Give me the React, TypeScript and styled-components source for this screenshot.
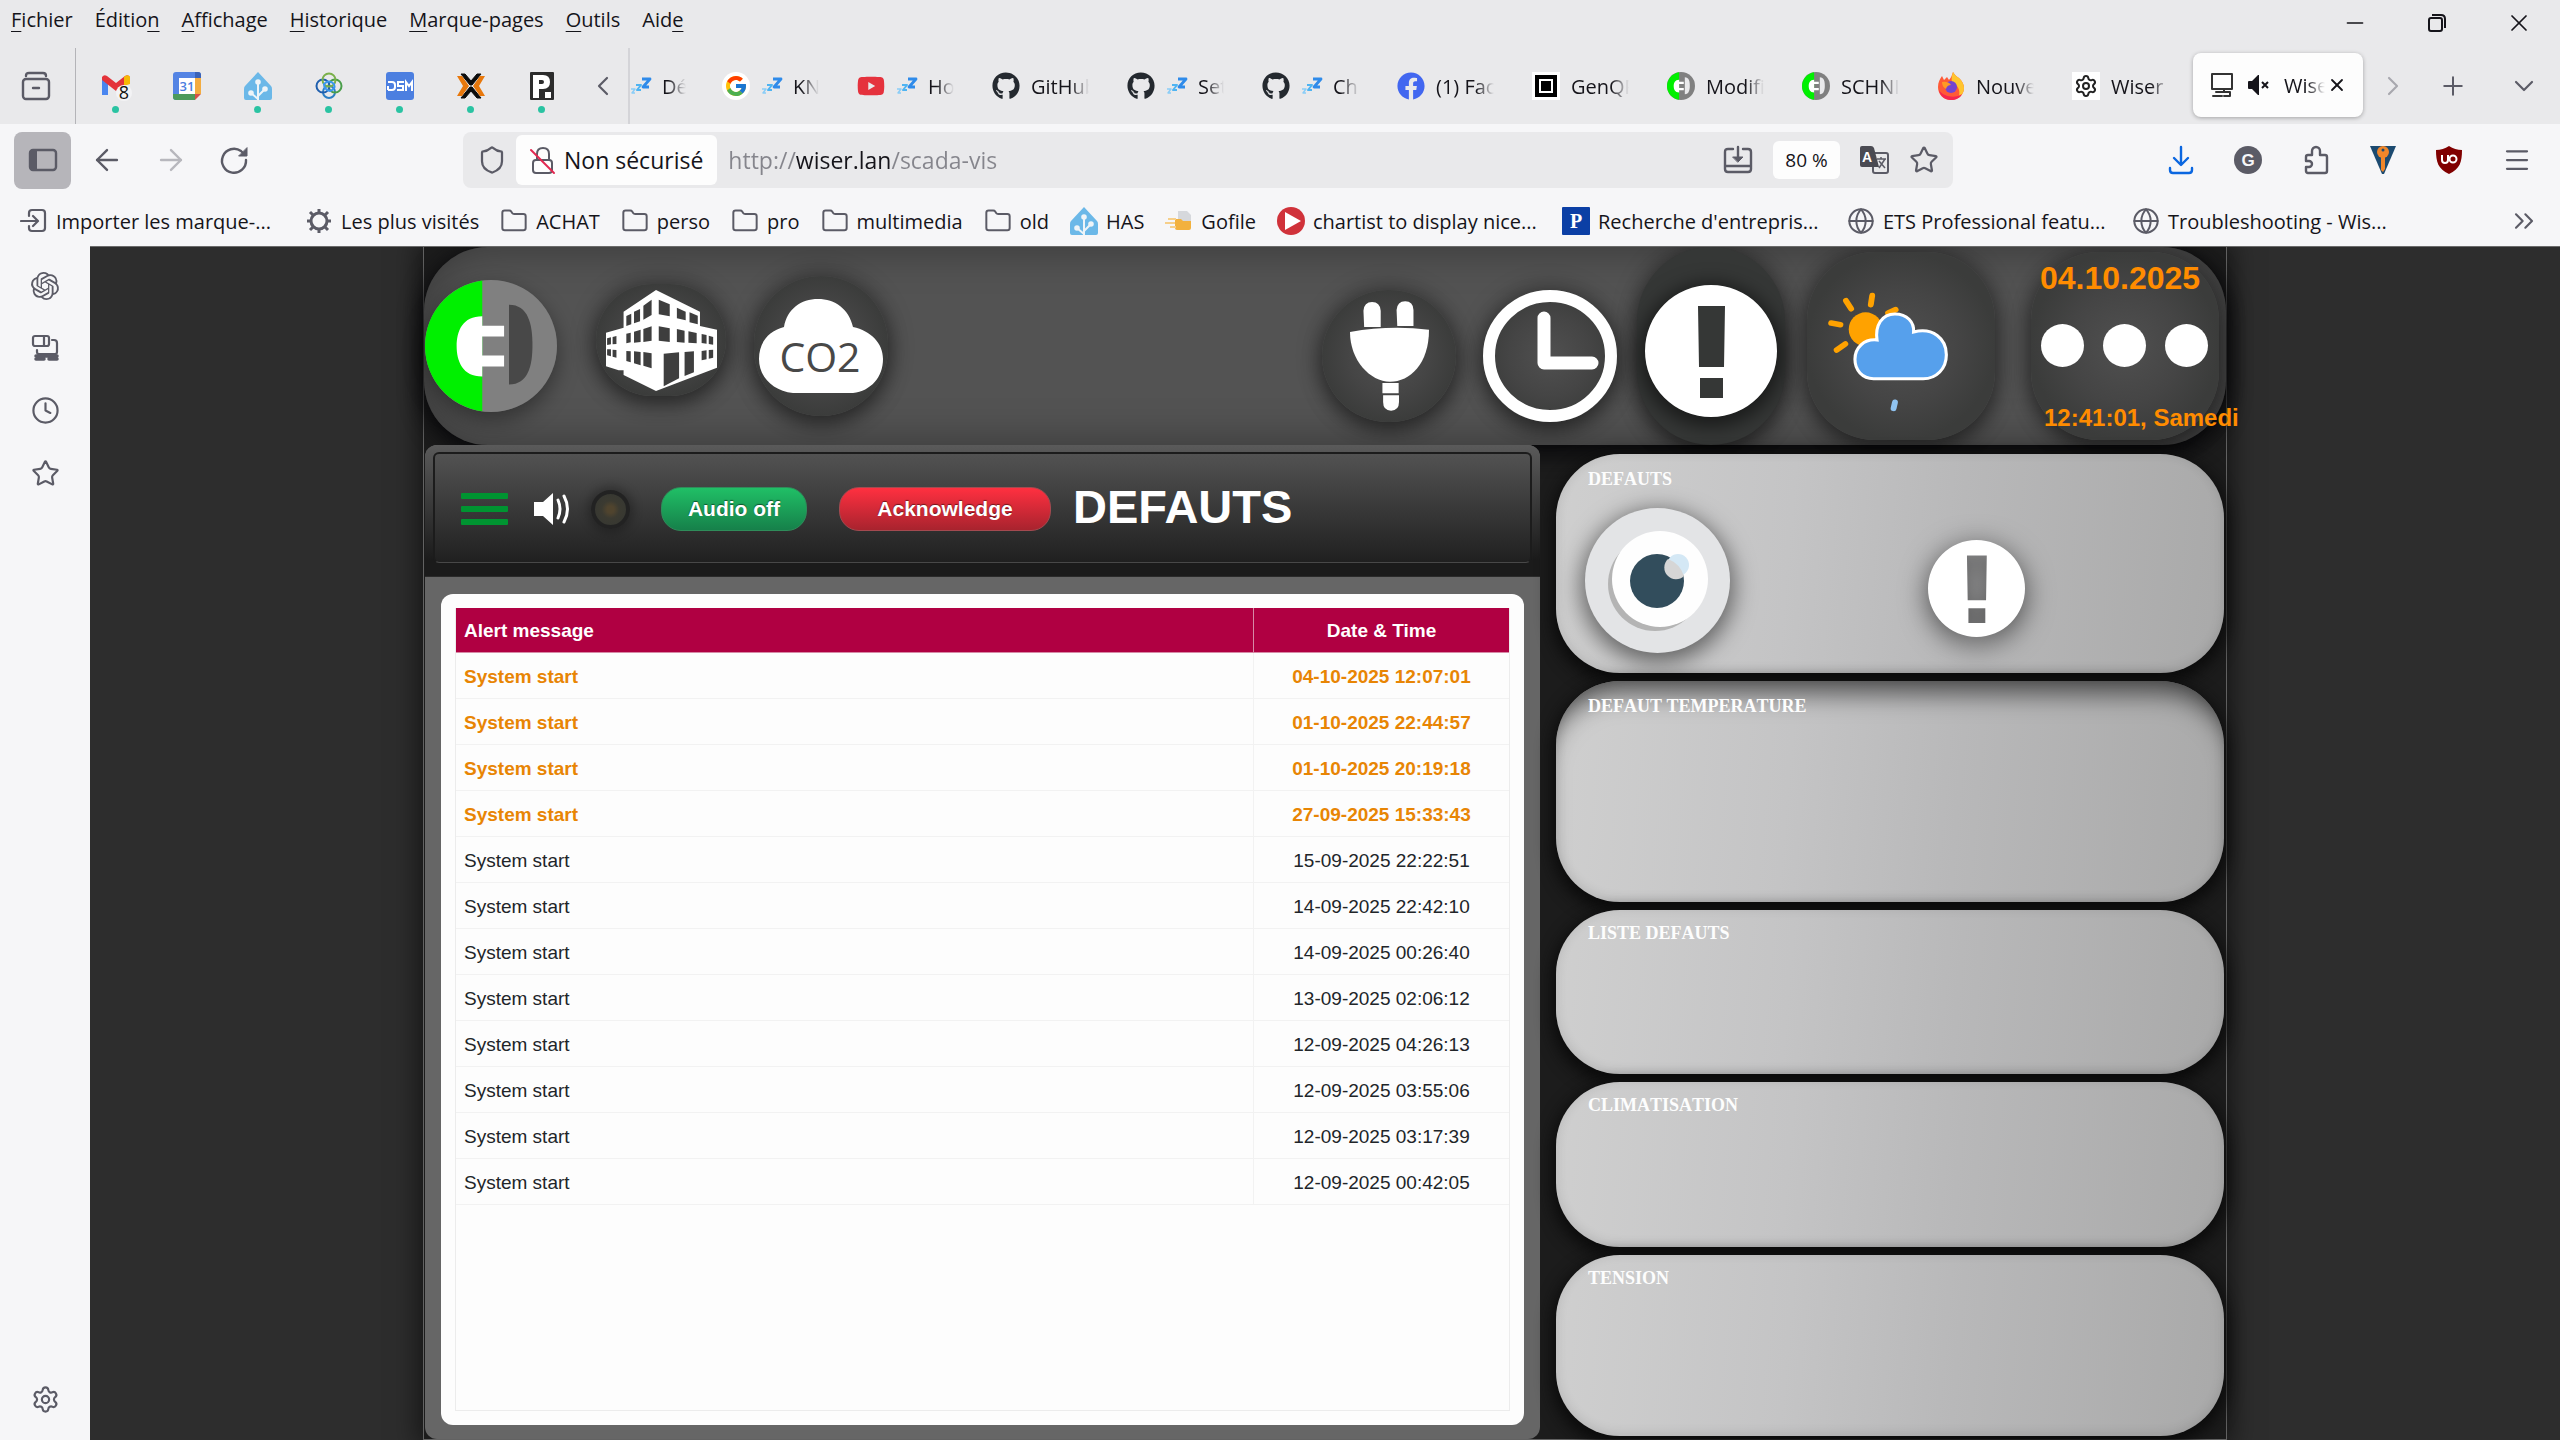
import React from "react";
import styled, { createGlobalStyle, css } from "styled-components";
import {
  ArrowLeft, ArrowRight, RotateCw, Shield, Folder, Star, Globe, Menu, Plus,
  ChevronLeft, ChevronRight, ChevronDown, ChevronsRight, X, Minus, Clock, Settings,
} from "lucide-react";
import { FaGithub, FaFacebook, FaYoutube } from "react-icons/fa";
import { FcGoogle } from "react-icons/fc";
import { SiOpenai } from "react-icons/si";

const ui = `"Segoe UI", "Open Sans", "Noto Sans", sans-serif`;
const arial = `"Liberation Sans", Arial, sans-serif`;
const ink = "#5b5b66";

const Global = createGlobalStyle`
  *, *::before, *::after { box-sizing: border-box; }
  body { margin: 0; background: #2d2d2d; font-family: ${ui}; }
  button { font: inherit; color: inherit; background: none; border: 0; padding: 0; cursor: pointer; }
  button svg { display: block; overflow: visible; }
  a { color: inherit; text-decoration: none; }
`;

/* ---------- browser chrome ---------- */

const Window = styled.div`
  display: flex;
  flex-direction: column;
  min-height: 100vh;
  color: #15141a;
`;

const TitleBar = styled.header`
  display: flex;
  justify-content: space-between;
  height: 46px;
  padding-left: 11px;
  background: #e9e9eb;
`;

const MenuList = styled.nav`
  display: flex;
  gap: 22px;
  font-size: 20px;
  line-height: 40px;
  u { text-underline-offset: 4px; text-decoration-thickness: 1px; }
`;

const WindowButtons = styled.div`
  display: flex;
  button { display: grid; place-items: center; width: 82px; }
`;

const TabStrip = styled.div`
  display: flex;
  align-items: stretch;
  height: 78px;
  padding-top: 2px;
  background: #e9e9eb;
  color: ${ink};
`;

const StripButton = styled.button<{ $w: number; $dim?: boolean }>`
  display: flex;
  flex: none;
  align-items: center;
  justify-content: center;
  width: ${(p) => p.$w}px;
  opacity: ${(p) => (p.$dim ? 0.45 : 1)};
`;

const PinnedList = styled.div`
  display: flex;
  flex: none;
  margin-left: 4px;
  padding-left: 4px;
  border-left: 1px solid #b4b4b8;
`;

const Pinned = styled.button<{ $dot?: boolean }>`
  position: relative;
  display: grid;
  place-items: center;
  width: 71px;
  ${(p) => p.$dot && css`
    &::after {
      content: "";
      position: absolute;
      left: 32px;
      bottom: 11px;
      width: 7px;
      height: 7px;
      border-radius: 50%;
      background: #2ac3a2;
    }
  `}
`;

const Tabs = styled.div`
  display: flex;
  flex: 0 1 1742px;
  min-width: 0;
  overflow: hidden;
  border-left: 2px solid #d4d4d8;
`;

const Tab = styled.button<{ $partial?: boolean }>`
  display: flex;
  flex: none;
  align-items: center;
  gap: 11px;
  width: ${(p) => (p.$partial ? 78 : 135)}px;
  padding: ${(p) => (p.$partial ? "0 22px 0 0" : "0 24px 0 14px")};
  color: #15141a;
  font-size: 20px;
  svg { flex: none; }
`;

const ActiveTab = styled(Tab)`
  width: 170px;
  height: 64px;
  margin: 5px 0;
  padding: 0 16px 0 17px;
  gap: 14px;
  border-radius: 8px;
  background: #fdfdfd;
  box-shadow: 0 1px 4px rgba(0, 0, 0, 0.3);
  button { margin-left: -12px; }
`;

const TabLabel = styled.span`
  flex: 1;
  min-width: 0;
  overflow: hidden;
  text-align: left;
  white-space: nowrap;
  mask-image: linear-gradient(90deg, #000 calc(100% - 18px), transparent);
`;

const ToolBar = styled.div`
  display: flex;
  align-items: center;
  height: 72px;
  padding: 0 14px;
  background: #f6f6f8;
  color: ${ink};
`;

const NavButtons = styled.div`
  display: flex;
  flex: 0 1 449px;
`;

const NavButton = styled.button<{ $active?: boolean; $dim?: boolean }>`
  display: grid;
  place-items: center;
  width: ${(p) => (p.$active ? 57 : 64)}px;
  height: 57px;
  margin-right: ${(p) => (p.$active ? 4 : 0)}px;
  border-radius: 8px;
  background: ${(p) => (p.$active ? "#b6b5ba" : "none")};
  opacity: ${(p) => (p.$dim ? 0.4 : 1)};
`;

const UrlBar = styled.form`
  display: flex;
  flex: 1 1 1490px;
  max-width: 1490px;
  align-items: center;
  height: 56px;
  padding: 0 14px;
  border-radius: 8px;
  background: #e9e9eb;
`;

const Security = styled.button`
  display: flex;
  align-items: center;
  gap: 8px;
  height: 50px;
  margin-left: 9px;
  padding: 0 14px;
  border-radius: 6px;
  background: #fdfdfd;
  color: #15141a;
  font-size: 23px;
  white-space: nowrap;
`;

const UrlInput = styled.input`
  flex: 1;
  min-width: 0;
  height: 50px;
  margin: 0 12px 0 11px;
  padding: 0;
  border: 0;
  outline: 0;
  font-family: ${ui};
  font-size: 23px;
  color: transparent;
  background: linear-gradient(90deg, #85858c 0 68px, #15141a 68px 163px, #85858c 163px);
  background-clip: text;
  -webkit-background-clip: text;
`;

const UrlActions = styled.div`
  display: flex;
  align-items: center;
  gap: 20px;
`;

const Zoom = styled.button`
  width: 67px;
  height: 38px;
  border-radius: 6px;
  background: #fdfdfd;
  color: #15141a;
  font-size: 19px;
`;

const Extensions = styled.div`
  display: flex;
  align-items: center;
  justify-content: space-between;
  width: 364px;
  margin: 0 14px 0 auto;
`;

const Bookmarks = styled.nav`
  display: flex;
  align-items: center;
  gap: 21px;
  height: 50px;
  padding: 0 20px;
  background: #f6f6f8;
  font-size: 20px;
  button { margin-left: auto; color: ${ink}; }
`;

const Bookmark = styled.a<{ $wide?: boolean }>`
  display: flex;
  align-items: center;
  gap: 8px;
  width: ${(p) => (p.$wide ? "264px" : "auto")};
  white-space: nowrap;
  svg { flex: none; color: ${ink}; }
`;

const Body = styled.div`
  display: flex;
  flex: 1;
`;

const SideBar = styled.aside`
  display: flex;
  flex: none;
  flex-direction: column;
  align-items: center;
  gap: 34px;
  width: 90px;
  padding: 26px 0;
  background: #f6f6f8;
  color: ${ink};
  button:last-child { margin-top: auto; }
`;

/* ---------- supervision page ---------- */

const Page = styled.main`
  display: flex;
  flex: 1;
  justify-content: center;
  min-width: 0;
  border-top: 1px solid #6b6b6b;
  background: #2d2d2d;
  overflow: hidden;
  font-family: ${arial};
`;

const Board = styled.div`
  display: flex;
  flex-direction: column;
  width: 1804px;
  border: 1px solid #626262;
  border-width: 0 1px 1px;
  background: #1c1c1c;
  box-shadow: 0 0 24px 6px rgba(0, 0, 0, 0.5);
`;

const TopBar = styled.section`
  display: flex;
  align-items: center;
  height: 198px;
  padding: 0 7px 0 1px;
  border-radius: 64px;
  background: #535353;
  box-shadow: inset 0 0 40px 4px rgba(0, 0, 0, 0.3), 0 6px 20px 4px #0a0a0c;
`;

const Spacer = styled.div`
  flex: 1;
`;

type TileProps = { $w: number; $h: number; $r: number; $gap: number; $seat?: "low" | "high"; $bare?: boolean; $deep?: boolean };

const seats = { low: "20px 0 0", high: "0 0 12px" };

const Tile = styled.button<TileProps>`
  display: grid;
  flex: none;
  place-items: center;
  width: ${(p) => p.$w}px;
  height: ${(p) => p.$h}px;
  margin: ${(p) => (p.$seat ? seats[p.$seat] : 0)};
  margin-left: ${(p) => p.$gap}px;
  padding: ${(p) => (p.$deep ? "10px 0 0" : 0)};
  border-radius: ${(p) => p.$r}px;
  background: ${(p) => (p.$bare ? "transparent" : p.$deep ? "#353736" : "radial-gradient(closest-side, #505050, #454545 60%, #3b3c3b)")};
  box-shadow: ${(p) => (p.$bare ? "0 8px 22px rgba(0, 0, 0, 0.4)" : "0 8px 20px rgba(0, 0, 0, 0.4), 0 0 22px 4px rgba(0, 0, 0, 0.25)")};
`;

const Halo = styled.span`
  display: block;
  border-radius: 50%;
  box-shadow: 0 4px 18px 6px rgba(0, 0, 0, 0.5);
`;

const StatusTile = styled(Tile)`
  display: flex;
  flex-direction: column;
  align-items: flex-start;
  gap: 30px;
  padding: 10px 0 0 9px;
  color: #ff8c00;
  font-weight: 700;
  white-space: nowrap;
`;

const DateText = styled.span`
  font-size: 32px;
  line-height: 32px;
`;

const TimeText = styled.span`
  padding-left: 4px;
  font-size: 24px;
  line-height: 42px;
`;

const Dots = styled.span`
  display: flex;
  justify-content: space-between;
  width: 168px;
  padding-left: 1px;
  i { width: 43px; height: 43px; border-radius: 50%; background: #fff; }
`;

const Columns = styled.div`
  display: grid;
  flex: 1;
  grid-template-columns: 1115fr 668fr;
  gap: 16px;
  padding: 0 2px 0 1px;
`;

const AlertPanel = styled.section`
  display: flex;
  flex-direction: column;
  min-width: 0;
  border-radius: 12px;
  background: #666;
  overflow: hidden;
`;

const AlertHeader = styled.header`
  height: 132px;
  padding: 7px 8px 13px;
  background: linear-gradient(#5a5a5a, #1b1b1b 88%);
  border-bottom: 1px solid #2a2a2a;
`;

const HeaderInner = styled.div`
  display: flex;
  align-items: center;
  height: 111px;
  padding: 2px 26px 0;
  border: 2px solid #1c1c1c;
  border-bottom: 1px solid #484848;
  border-radius: 6px;
  background: linear-gradient(#525252, #202020);
`;

const Burger = styled.button`
  display: grid;
  gap: 7px;
  width: 47px;
  margin-right: 26px;
  i { height: 6px; border-radius: 1px; background: #009431; }
`;

const Led = styled.span`
  width: 39px;
  height: 39px;
  margin: 0 31px 0 21px;
  border: 4px solid #222;
  border-radius: 50%;
  background: radial-gradient(#50442e 0 16%, #3b3a31 40%, #343632);
  box-shadow: 0 0 10px 4px rgba(0, 0, 0, 0.25);
`;

const ActionButton = styled.button<{ $w: number; $tone: "green" | "red" }>`
  width: ${(p) => p.$w}px;
  height: 44px;
  margin-right: ${(p) => (p.$tone === "green" ? 32 : 22)}px;
  border: 1px solid ${(p) => (p.$tone === "green" ? "#2f8c5a" : "#a34a50")};
  border-radius: 20px;
  background: ${(p) => (p.$tone === "green" ? "linear-gradient(#20bf66, #16804a)" : "linear-gradient(#ff3040, #a8232e)")};
  color: #fff;
  font-size: 21px;
  font-weight: 700;
  text-shadow: 0 -1px 1px rgba(0, 0, 0, 0.5);
`;

const Title = styled.h1`
  margin: 0;
  padding-bottom: 5px;
  color: #fff;
  font-size: 47px;
  line-height: 52px;
`;

const AlertCard = styled.div`
  display: flex;
  flex: 1;
  margin: 17px 16px 14px;
  padding: 14px;
  border-radius: 12px;
  background: #fdfdfd;
`;

const TableFrame = styled.div`
  flex: 1;
  border: 1px solid #ececec;
  border-top: 0;
`;

const AlertTable = styled.table`
  width: 100%;
  border-collapse: separate;
  border-spacing: 0;
  font-size: 19px;
  color: #212529;
  th, td { height: 46px; padding: 2px 8px 0; border-bottom: 1px solid #f2f2f2; text-align: left; }
  th { height: 45px; background: #b00042; color: #fff; border-bottom-color: #d78aa6; }
  th + th, td + td { width: 256px; border-left: 1px solid #f2f2f2; text-align: center; }
  th + th { border-left-color: #d78aa6; }
`;

const AlertRow = styled.tr<{ $fresh: boolean }>`
  ${(p) => p.$fresh && css`
    color: #e88504;
    font-weight: 700;
  `}
`;

const CardColumn = styled.div`
  display: grid;
  grid-template-rows: 219fr 221fr 165fr 165fr 181fr;
  gap: 8px;
  padding: 9px 0 3px;
`;

const Card = styled.section<{ $first?: boolean; $shaded?: boolean }>`
  padding: ${(p) => (p.$first || p.$shaded ? 15 : 13)}px 32px 0;
  border-radius: 64px;
  background: linear-gradient(95deg, #cfcfcf, #c4c4c5 35%, #b8b8b9 60%, #a9a9a9);
  box-shadow:
    inset 0 -2px 12px rgba(0, 0, 0, 0.12),
    inset 0 ${(p) => (p.$shaded ? "26px 26px -14px rgba(0, 0, 0, 0.6)" : "0 0 transparent")},
    0 6px 16px 4px #0b0b0b;
`;

const CardTitle = styled.h2`
  margin: 0;
  color: #fdfdfd;
  font: 700 18px/20px "Liberation Serif", "Times New Roman", serif;
  font-kerning: none;
`;

const CardIcons = styled.div`
  display: flex;
  align-items: flex-start;
`;

const EyeButton = styled.button`
  width: 145px;
  height: 145px;
  margin: 19px 198px 0 -3px;
  border-radius: 50%;
  background: #e3e4e6;
  box-shadow: 0 6px 22px 4px rgba(0, 0, 0, 0.5);
`;

const WarnButton = styled.button`
  margin-top: 51px;
  border-radius: 50%;
  svg { filter: drop-shadow(0 6px 14px rgba(0, 0, 0, 0.6)); }
`;

/* ---------- drawings ---------- */

const line = { fill: "none", stroke: "currentColor", strokeWidth: 2, strokeLinecap: "round", strokeLinejoin: "round" } as const;

const Brand = ({ size, hole = "#484848" }: { size: number; hole?: string }) => (
  <svg width={size} height={size} viewBox="46 117 242 398" preserveAspectRatio="none">
    <ellipse cx="167" cy="316" rx="121" ry="199" fill="#808080" />
    <path d="M151 118.800C90 134 46 216 46 316S90 498 151 513Z" fill="#00f000" />
    <path d="M200 192c35 0 43 58 43 121s-8 119-43 119Z" fill={hole} />
    <path d="M151 226c-36 0-47 44-47 90s11 92 47 92v-30h40v-33h-40v-58h40v-32h-40Z" fill="#fff" />
  </svg>
);

const Building = () => {
  const panes = [
    "412,225 421,218 421,250 412,255", "426,212 437,204 437,241 426,247", "443,194 458,176 458,222 443,236",
    "471,176 491,190 491,226 471,220", "504,200 520,212 520,238 504,232", "527,214 542,224 542,250 527,244",
    "412,278 420,275 420,304 412,307", "426,272 438,266 438,303 426,305", "443,264 458,256 458,299 443,303",
    "471,256 491,262 491,303 471,299", "504,264 518,269 518,305 504,303", "525,271 540,276 540,307 525,305",
    "549,279 558,282 558,308 549,306", "562,284 570,288 570,311 562,309",
    "412,330 420,331 420,364 412,360", "426,331 438,333 438,373 426,367", "443,333 458,337 458,382 443,374",
    "480,338 508,334 508,412 480,436", "518,333 535,331 535,394 518,405",
    "549,330 558,328 558,355 549,358", "562,327 570,326 570,350 562,353",
    "377,292 384,289 384,310 377,312", "387,288 394,285 394,309 387,310",
    "377,325 384,325 384,346 377,343", "387,326 394,327 394,350 387,347",
  ];
  return (
    <svg width="111" height="101" viewBox="375 147 202 303" preserveAspectRatio="none">
      <path d="M375 275 407 260V212L466 147 546 212V255L577 266V380L466 450 407 402V388L398 388 375 376Z" fill="#fff" />
      {panes.map((p) => <polygon key={p} points={p} fill="#3e3e3e" />)}
    </svg>
  );
};

const Co2 = () => (
  <svg width="124" height="94" viewBox="0 0 124 94">
    <path d="M34 94C14 92 0 78 0 60 0 44 9 32 25 28 28 10 42 0 59 0s31 10 35 28c18 4 30 16 30 32 0 18-12 32-30 34Z" fill="#fff" />
    <text x="61" y="73" textAnchor="middle" fontFamily="Open Sans, sans-serif" fontSize="41" fill="#484848">CO2</text>
  </svg>
);

const Plug = () => (
  <svg width="79" height="110" viewBox="316 192 229 330" preserveAspectRatio="none" fill="#fff">
    <path d="M355 221q2-26 25-26t25 26v49h-48ZM451 219q2-26 25-26t24 26v48h-47Z" />
    <path d="M316 285Q430 264 545 278C545 380 490 434 432 434S316 370 316 285Z" />
    <path d="M410 438h47v31h-47ZM412 475h46v20q0 26-23 26t-23-26Z" />
  </svg>
);

const WallClock = () => (
  <svg width="134" height="132" viewBox="0 0 134 132" fill="none" stroke="#fff">
    <ellipse cx="67" cy="66" rx="61" ry="60" strokeWidth="12" />
    <path d="M61 28v45h48" strokeWidth="13" strokeLinecap="round" strokeLinejoin="round" />
  </svg>
);

const Exclamation = ({ size }: { size: number }) => (
  <svg width={size} height={size} viewBox="0 0 132 132">
    <path fill="#fff" fillRule="evenodd" d="M66 0a66 66 0 1 1 0 132 66 66 0 0 1 0-132ZM53 21l1 61h25l1-61ZM55 93v20h23V93Z" />
  </svg>
);

const Weather = () => (
  <svg width="188" height="188" viewBox="195 30 545 564" preserveAspectRatio="none">
    <g stroke="#ffa200" strokeWidth="17" strokeLinecap="round">
      <path d="M384 161 380 188M308 176 323 200M265 243 292 248M281 324 306 306M430 213 452 203" />
    </g>
    <ellipse cx="365" cy="262" rx="49" ry="51" fill="#ffa200" />
    <path d="M388 410C355 410 334 384 334 352 334 318 360 290 398 294 392 250 412 216 450 216 485 216 506 240 504 270 560 255 599 290 599 338 599 380 570 410 532 410Z" fill="#56a0ec" stroke="#fff" strokeWidth="9" />
    <path d="M450 481 446 499" stroke="#90c4f2" strokeWidth="17" strokeLinecap="round" />
  </svg>
);

const Eye = () => (
  <svg width="145" height="145" viewBox="0 0 145 145">
    <circle cx="70" cy="76" r="47" fill="#b4b4b4" />
    <circle cx="75" cy="71" r="48" fill="#fefefe" />
    <circle cx="72" cy="73" r="27" fill="#324d5c" />
    <circle cx="93" cy="57" r="11" fill="#d4e8f5" />
    <path d="M83 51a27 27 0 0 1 16 17 11 11 0 0 1-16-17Z" fill="#d6d6d6" />
  </svg>
);

const Speaker = () => (
  <svg width="36" height="32" viewBox="0 0 36 32" fill="#fff">
    <path d="M0 9h9L19 0v32L9 23H0Z" />
    <path d="M24 7q4 9 0 18M30 3q7 13 0 26" fill="none" stroke="#fff" strokeWidth="3" strokeLinecap="round" />
  </svg>
);

const Zzz = () => (
  <svg width="21" height="18" viewBox="0 0 21 18" fill="none" strokeLinejoin="round">
    <path d="M12 2h8l-7 8h6" stroke="#2f8bea" strokeWidth="2.800" />
    <path d="M6 8h5l-4 5h4" stroke="#4fb4f2" strokeWidth="2" />
    <path d="M1 12h4l-3 4h3" stroke="#8acdf7" strokeWidth="1.500" />
  </svg>
);

const Gmail = () => (
  <svg width="30" height="28" viewBox="0 0 30 28">
    <path d="M1 5v18h6V11Z" fill="#4a86f0" />
    <path d="M1 5q2-3 5-1l9 7 9-7q3-2 5 1v3L15 19 1 8Z" fill="#e4333a" />
    <path d="M23 5l1-1q4-2 5 1v7l-6 2Z" fill="#f6b905" />
    <circle cx="23" cy="21" r="8" fill="#f3f3f5" />
    <text x="23" y="27" fontFamily="Open Sans, sans-serif" fontSize="18" textAnchor="middle" fill="#111">8</text>
  </svg>
);

const Calendar = () => (
  <svg width="28" height="28" viewBox="0 0 28 28">
    <rect width="28" height="28" rx="3" fill="#5484e4" /><path d="M22 0h3q3 0 3 3v3h-6Z" fill="#3b63b8" />
    <path d="M22 6h6v16h-6Z" fill="#f3ac40" /><path d="M0 22h22v6H3q-3 0-3-3Z" fill="#4c9a5c" /><path d="M22 22h6v6h-6Z" fill="#e9e9eb" /><path d="M22 22h6l-6 6Z" fill="#d5504a" />
    <path d="M6 6h16v16H6Z" fill="#fff" />
    <text x="14" y="19" fontFamily="Open Sans, sans-serif" fontSize="13" fontWeight="600" textAnchor="middle" fill="#4a7de0">31</text>
  </svg>
);

const HomeAssistant = () => (
  <svg width="28" height="28" viewBox="0 0 28 28">
    <path d="M14 0 27 14q1 1 1 3v9q0 2-2 2H2q-2 0-2-2v-9q0-2 1-3Z" fill="#6bb8e8" />
    <g stroke="#eef4f8" strokeWidth="2" fill="#eef4f8">
      <path d="M14 11v17M14 27l-7-6M14 24l7-7" fill="none" />
      <circle cx="14" cy="10" r="1.800" /><circle cx="7" cy="21" r="1.800" /><circle cx="21" cy="17" r="1.800" />
    </g>
  </svg>
);

const Knot = () => (
  <svg width="28" height="28" viewBox="0 0 28 28" fill="none" strokeWidth="2">
    <circle cx="14" cy="20" r="6" stroke="#2b7fc4" /><circle cx="20" cy="14" r="6.500" stroke="#4a9e4a" />
    <circle cx="8" cy="14" r="6.500" stroke="#1f5fae" /><circle cx="14" cy="8" r="6.500" stroke="#7ab04a" />
    <path d="M9 12q5-5 10 0 2 5-4 7-6-1-6-7Z" stroke="#3a97f0" />
  </svg>
);

const Dsm = () => (
  <svg width="28" height="28" viewBox="0 0 28 28" fill="none" stroke="#fff" strokeWidth="2">
    <rect width="28" height="28" rx="3" fill="#4c7fe0" stroke="none" />
    <path d="M2 10h4q3 0 3 3v2q0 3-3 3H2M2 14v4M18 10h-6v4h5v4h-6M20 19v-9l3 4 3-4v9" />
  </svg>
);

const CrossMark = () => (
  <svg width="28" height="26" viewBox="0 0 28 26">
    <path d="M4 1h4l6 7 6-7h4l-9 11h-2ZM4 25h4l6-7 6 7h4l-9-11h-2Z" fill="#0c0c0c" stroke="#0c0c0c" />
    <path d="M0 3h5l7 10-7 10H0l6-10ZM28 3h-5l-7 10 7 10h5l-6-10Z" fill="#e8780c" />
  </svg>
);

const PSquare = ({ bg, serif, w }: { bg: string; serif?: boolean; w: number }) => (
  <svg width={w} height="28" viewBox={`0 0 ${w} 28`}>
    <rect width={w} height="28" rx="1" fill={bg} />
    {serif
      ? <text x={w / 2} y="21" fontFamily="Liberation Serif, serif" fontSize="20" fontWeight="700" textAnchor="middle" fill="#fff">P</text>
      : <path fill="#fff" fillRule="evenodd" d="M3 3h10q7 0 7 7t-7 7H9v9H3ZM9 8v4h3q2 0 2-2t-2-2ZM15 20h6v6h-6Z" />}
  </svg>
);

const GenQr = () => (
  <svg width="28" height="28" viewBox="0 0 28 28">
    <path d="M0 0h28v28H0Z" fill="#fff" /><path d="M5 5h18v18H5Z" fill="#fff" stroke="#000" strokeWidth="4" /><path d="M9 9h10v10H9Z" />
  </svg>
);

const Firefox = () => (
  <svg width="28" height="28" viewBox="0 0 28 28">
    <path d="M14 28C6 28 1 22 1 15 1 10 3 7 5 4l2 4 3-3 2 3c2-2 3-5 4-8 2 3 3 4 6 6 3 3 5 6 5 10 0 7-6 12-13 12Z" fill="#ff5a36" />
    <path d="M16 0c2 3 3 4 6 6 3 3 5 6 5 10 0 5-3 8-6 10 3-5 1-12-4-14-3-2-3-6-1-12Z" fill="#ffc52e" />
    <path d="M2 18c1 6 6 10 12 10 5 0 9-2 11-6-5 4-18 4-23-4Z" fill="#f5264f" />
    <circle cx="14" cy="15" r="6" fill="#7544d0" /><path d="M5 10q6-1 9 3-4 0-5 4-4-2-4-7Z" fill="#ff9a24" />
  </svg>
);

const Computer = () => (
  <svg width="24" height="24" viewBox="0 0 24 24" {...line} color="#333">
    <path d="M2 1h20v15H2ZM14 16v3M6 19h14v4h-6M3 23h9" />
  </svg>
);

const Muted = () => (
  <svg width="22" height="20" viewBox="0 0 22 20" fill="#15141a">
    <path d="M0 7q0-1 1-1h3l6-6h1v20h-1l-6-6H1q-1 0-1-1Z" /><path d="m14 7 6 6m0-6-6 6" stroke="#15141a" strokeWidth="2" />
  </svg>
);

const Restore = () => (
  <svg width="20" height="20" viewBox="0 0 20 20" fill="none" stroke="#15141a" strokeWidth="2">
    <rect x="2" y="5" width="13" height="13" rx="2" /><path d="M5 2h9q4 0 4 4v9" />
  </svg>
);

const Archive = () => (
  <svg width="30" height="30" viewBox="0 0 30 30" {...line} strokeWidth="2.400">
    <path d="M5 5q0-3 3-3h14q3 0 3 3" /><rect x="2" y="8" width="26" height="20" rx="3" /><path d="M12 17h6" />
  </svg>
);

const PanelIcon = () => (
  <svg width="30" height="24" viewBox="0 0 30 24">
    <rect x="2" y="2" width="26" height="20" rx="3" fill="none" stroke={ink} strokeWidth="2.400" /><path d="M2 2h7v20H2Z" fill={ink} />
  </svg>
);

const Reload = () => (
  <svg width="28" height="28" viewBox="0 0 28 28" {...line} strokeWidth="2.400">
    <path d="M25 14a12 12 0 1 1-5-9l4 4" /><path d="M26 2v8h-8Z" fill="currentColor" strokeWidth="1" />
  </svg>
);

const LockOff = () => (
  <svg width="26" height="28" viewBox="0 0 26 28" {...line} color={ink}>
    <rect x="3" y="14" width="19" height="13" rx="3" /><path d="M7 14V8q0-6 6-6t6 6v6" /><path d="M1 4 24 27" stroke="#e22850" />
  </svg>
);

const Install = () => (
  <svg width="30" height="30" viewBox="0 0 30 30" {...line} strokeWidth="2.400">
    <path d="M10 4H5q-3 0-3 3v17q0 3 3 3h20q3 0 3-3V7q0-3-3-3h-5M2 21h26M15 2v12" />
    <path d="M10 12h10l-5 5Z" fill="currentColor" strokeWidth="1" />
  </svg>
);

const Translate = () => (
  <svg width="29" height="30" viewBox="0 0 29 30">
    <rect x="13" y="8" width="15" height="20" rx="2" fill="none" stroke={ink} strokeWidth="2" />
    <path d="M2 1h9q2 0 3 2l5 19H2q-2 0-2-2V3q0-2 2-2Z" fill="#4a4a52" />
    <path d="m19 23 6-9M17 14h9M21 12v2M19 16l6 7" stroke={ink} strokeWidth="1.500" />
    <text x="7" y="17" fontFamily="Liberation Sans, sans-serif" fontSize="14" fontWeight="700" textAnchor="middle" fill="#fff">A</text>
  </svg>
);

const Download = () => (
  <svg width="26" height="28" viewBox="0 0 26 28" {...line} strokeWidth="2.400" color="#0a66e0">
    <path d="M13 1v17M6 12l7 7 7-7M2 22v2q0 3 3 3h16q3 0 3-3v-2" />
  </svg>
);

const Badge = () => (
  <svg width="28" height="28" viewBox="0 0 28 28">
    <circle cx="14" cy="14" r="14" fill={ink} />
    <text x="14" y="20" fontFamily="Liberation Sans, sans-serif" fontSize="17" fontWeight="700" textAnchor="middle" fill="#f6f6f8">G</text>
  </svg>
);

const PuzzlePiece = () => (
  <svg width="28" height="28" viewBox="0 0 28 28" {...line} strokeWidth="2.400">
    <path d="M10 9V5a4 4 0 0 1 8 0v4h5q2 0 2 2v14q0 2-2 2H6q-2 0-2-2v-4h3a3 3 0 0 0 0-6H4v-4q0-2 2-2Z" />
  </svg>
);

const KeyShield = () => (
  <svg width="26" height="28" viewBox="0 0 26 28">
    <path d="M0 0h26L14 28h-2Z" fill="#1c4a70" /><circle cx="13" cy="6" r="6" fill="#f0862a" /><path d="M11 10h4v13l-2 3-2-2Z" fill="#f0862a" /><circle cx="13" cy="4" r="1.500" fill="#1c4a70" />
  </svg>
);

const Ublock = () => (
  <svg width="26" height="28" viewBox="0 0 26 28">
    <path d="M13 0q6 4 13 4c0 12-2 19-13 24C2 23 0 16 0 4q7 0 13-4Z" fill="#800000" />
    <path d="M6 9v5q0 3 3 3t3-3V9" fill="none" stroke="#fff" strokeWidth="2" /><circle cx="17" cy="13" r="3.500" fill="none" stroke="#fff" strokeWidth="2" />
  </svg>
);

const ImportIcon = () => (
  <svg width="28" height="26" viewBox="0 0 28 26" {...line} strokeWidth="2.200">
    <path d="M9 8V5q0-3 3-3h10q3 0 3 3v15q0 3-3 3H12q-3 0-3-3v-2M1 13h16M13 8l5 5-5 5" />
  </svg>
);

const Gear = () => (
  <svg width="28" height="28" viewBox="0 0 28 28" fill="none" stroke={ink}>
    <circle cx="14" cy="14" r="8" strokeWidth="3" />
    <path d="M14 2v4M14 22v4M2 14h4M22 14h4M5 5l4 4M19 19l4 4M23 5l-4 4M9 19l-4 4" strokeWidth="3" />
  </svg>
);

const Gofile = () => (
  <svg width="28" height="28" viewBox="0 0 28 28">
    <path d="M13 4h9l4 4v10H13Z" fill="#d6d8dc" /><path d="M10 12h6l2 2h8v7q0 2-2 2H12q-2 0-2-2Z" fill="#f2b13e" /><path d="M3 12h8M0 16h10M5 20h6" stroke="#f6cf8a" strokeWidth="2" />
  </svg>
);

const PlayDisc = () => (
  <svg width="28" height="28" viewBox="0 0 28 28"><circle cx="14" cy="14" r="14" fill="#d0323a" /><path d="M8 5 24 14 8 23Z" fill="#fff" /></svg>
);

const Devices = () => (
  <svg width="28" height="28" viewBox="0 0 28 28" {...line} strokeWidth="2.200">
    <rect x="2" y="2" width="16" height="10" rx="2" /><path d="M13 2v10M21 6h2q3 0 3 3v9q0 2-2 2H8q-2 0-2-2v-2" />
    <path d="M5 25h8M18 25h8M5 22h21" strokeWidth="3.500" />
  </svg>
);

/* ---------- data ---------- */

const menus: [string, string, string][] = [
  ["", "F", "ichier"], ["Éditio", "n", ""], ["", "A", "ffichage"], ["", "H", "istorique"],
  ["", "M", "arque-pages"], ["", "O", "utils"], ["Aid", "e", ""],
];

const pins = [
  { name: "Gmail", icon: <Gmail />, dot: true }, { name: "Agenda", icon: <Calendar /> },
  { name: "Home Assistant", icon: <HomeAssistant />, dot: true }, { name: "Réseau", icon: <Knot />, dot: true },
  { name: "DSM", icon: <Dsm />, dot: true }, { name: "Proxmox", icon: <CrossMark />, dot: true },
  { name: "P", icon: <PSquare bg="#2c2c2c" w={24} />, dot: true },
];

const GoogleDisc = styled.span`
  display: grid;
  flex: none;
  place-items: center;
  width: 28px;
  height: 28px;
  border-radius: 50%;
  background: #fff;
`;

const GearFavicon = styled(GoogleDisc)`
  border-radius: 0;
  color: #222;
`;

const tabs = [
  { icon: <GoogleDisc><FcGoogle size={24} /></GoogleDisc>, sleep: true, label: "KN" },
  { icon: <FaYoutube size={28} color="#e5323d" />, sleep: true, label: "Ho" },
  { icon: <FaGithub size={28} color="#24292f" />, label: "GitHub" },
  { icon: <FaGithub size={28} color="#24292f" />, sleep: true, label: "Set" },
  { icon: <FaGithub size={28} color="#24292f" />, sleep: true, label: "Ch" },
  { icon: <FaFacebook size={28} color="#4267f0" />, label: "(1) Fac" },
  { icon: <GenQr />, label: "GenQR" },
  { icon: <Brand size={28} hole="#e9e9eb" />, label: "Modifi" },
  { icon: <Brand size={28} hole="#e9e9eb" />, label: "SCHNI" },
  { icon: <Firefox />, label: "Nouve" },
  { icon: <GearFavicon><Settings size={24} strokeWidth={2} /></GearFavicon>, label: "Wiser" },
];

const folder = <Folder size={28} strokeWidth={1.7} />;
const globe = <Globe size={28} strokeWidth={1.7} />;
const bookmarks = [
  { icon: <ImportIcon />, label: "Importer les marque-...", wide: true },
  { icon: <Gear />, label: "Les plus visités" },
  { icon: folder, label: "ACHAT" }, { icon: folder, label: "perso" }, { icon: folder, label: "pro" },
  { icon: folder, label: "multimedia" }, { icon: folder, label: "old" },
  { icon: <HomeAssistant />, label: "HAS" }, { icon: <Gofile />, label: "Gofile" },
  { icon: <PlayDisc />, label: "chartist to display nice...", wide: true },
  { icon: <PSquare bg="#0b3fa5" serif w={28} />, label: "Recherche d'entrepris...", wide: true },
  { icon: globe, label: "ETS Professional featu...", wide: true },
  { icon: globe, label: "Troubleshooting - Wis...", wide: true },
];

const alerts = [
  "04-10-2025 12:07:01", "01-10-2025 22:44:57", "01-10-2025 20:19:18", "27-09-2025 15:33:43",
  "15-09-2025 22:22:51", "14-09-2025 22:42:10", "14-09-2025 00:26:40", "13-09-2025 02:06:12",
  "12-09-2025 04:26:13", "12-09-2025 03:55:06", "12-09-2025 03:17:39", "12-09-2025 00:42:05",
];

export default function App() {
  return (
    <Window>
      <Global />
      <TitleBar>
        <MenuList>
          {menus.map(([before, key, after]) => <a href="#menu" key={key + after}>{before}<u>{key}</u>{after}</a>)}
        </MenuList>
        <WindowButtons>
          <button aria-label="Réduire"><Minus size={26} strokeWidth={1.5} /></button>
          <button aria-label="Restaurer"><Restore /></button>
          <button aria-label="Fermer"><X size={28} strokeWidth={1.5} /></button>
        </WindowButtons>
      </TitleBar>

      <TabStrip>
        <StripButton $w={71} aria-label="Onglets récents"><Archive /></StripButton>
        <PinnedList>
          {pins.map((p) => <Pinned key={p.name} aria-label={p.name} $dot={p.dot}>{p.icon}</Pinned>)}
        </PinnedList>
        <StripButton $w={51} aria-label="Défiler à gauche"><ChevronLeft size={32} strokeWidth={1.6} /></StripButton>
        <Tabs>
          <Tab $partial><Zzz /><TabLabel>Dé</TabLabel></Tab>
          {tabs.map((t) => (
            <Tab key={t.label}>{t.icon}{t.sleep && <Zzz />}<TabLabel>{t.label}</TabLabel></Tab>
          ))}
          <ActiveTab as="div">
            <Computer /><Muted /><TabLabel>Wise</TabLabel>
            <button aria-label="Fermer l'onglet"><X size={20} strokeWidth={2.2} /></button>
          </ActiveTab>
        </Tabs>
        <StripButton $w={46} $dim aria-label="Défiler à droite"><ChevronRight size={32} strokeWidth={1.6} /></StripButton>
        <StripButton $w={74} aria-label="Nouvel onglet"><Plus size={30} strokeWidth={1.6} /></StripButton>
        <StripButton $w={68} aria-label="Lister les onglets"><ChevronDown size={32} strokeWidth={1.6} /></StripButton>
      </TabStrip>

      <ToolBar>
        <NavButtons>
          <NavButton $active aria-label="Panneau latéral"><PanelIcon /></NavButton>
          <NavButton aria-label="Retour"><ArrowLeft size={34} strokeWidth={1.7} /></NavButton>
          <NavButton $dim aria-label="Suivant"><ArrowRight size={34} strokeWidth={1.7} /></NavButton>
          <NavButton aria-label="Actualiser"><Reload /></NavButton>
        </NavButtons>
        <UrlBar onSubmit={(e) => e.preventDefault()}>
          <Shield size={30} strokeWidth={1.8} />
          <Security type="button"><LockOff />Non sécurisé</Security>
          <UrlInput aria-label="Adresse" defaultValue="http://wiser.lan/scada-vis" />
          <UrlActions>
            <button type="button" aria-label="Installer"><Install /></button>
            <Zoom type="button">80 %</Zoom>
            <button type="button" aria-label="Traduire"><Translate /></button>
            <button type="button" aria-label="Marquer cette page"><Star size={30} strokeWidth={1.8} /></button>
          </UrlActions>
        </UrlBar>
        <Extensions>
          <button aria-label="Téléchargements"><Download /></button>
          <button aria-label="Compte"><Badge /></button>
          <button aria-label="Extensions"><PuzzlePiece /></button>
          <button aria-label="Clé"><KeyShield /></button>
          <button aria-label="Bloqueur"><Ublock /></button>
          <button aria-label="Menu"><Menu size={30} strokeWidth={1.8} /></button>
        </Extensions>
      </ToolBar>

      <Bookmarks>
        {bookmarks.map((b) => <Bookmark key={b.label} href="#bookmark" $wide={b.wide}>{b.icon}{b.label}</Bookmark>)}
        <button aria-label="Plus de marque-pages"><ChevronsRight size={32} strokeWidth={1.6} /></button>
      </Bookmarks>

      <Body>
        <SideBar>
          <button aria-label="ChatGPT"><SiOpenai size={28} /></button>
          <button aria-label="Appareils"><Devices /></button>
          <button aria-label="Historique"><Clock size={29} strokeWidth={1.8} /></button>
          <button aria-label="Marque-pages"><Star size={29} strokeWidth={1.8} /></button>
          <button aria-label="Paramètres"><Settings size={29} strokeWidth={1.8} /></button>
        </SideBar>

        <Page>
          <Board>
            <TopBar>
              <Tile $w={132} $h={132} $r={66} $gap={0} $bare aria-label="Accueil"><Brand size={132} /></Tile>
              <Tile $w={130} $h={112} $r={56} $gap={39} $seat="high" aria-label="Bâtiment"><Building /></Tile>
              <Tile $w={134} $h={140} $r={70} $gap={28} aria-label="CO2"><Co2 /></Tile>
              <Spacer />
              <Tile $w={134} $h={132} $r={66} $gap={0} $seat="low" aria-label="Énergie"><Plug /></Tile>
              <Tile $w={134} $h={132} $r={66} $gap={27} $seat="low" aria-label="Horloge"><WallClock /></Tile>
              <Tile $w={148} $h={198} $r={74} $gap={20} $deep aria-label="Défauts"><Halo><Exclamation size={132} /></Halo></Tile>
              <Tile $w={188} $h={188} $r={68} $gap={22} aria-label="Météo"><Weather /></Tile>
              <StatusTile $w={188} $h={188} $r={68} $gap={36}>
                <DateText>04.10.2025</DateText>
                <Dots><i /><i /><i /></Dots>
                <TimeText>12:41:01, Samedi</TimeText>
              </StatusTile>
            </TopBar>

            <Columns>
              <AlertPanel>
                <AlertHeader>
                  <HeaderInner>
                    <Burger aria-label="Menu"><i /><i /><i /></Burger>
                    <Speaker />
                    <Led />
                    <ActionButton $w={146} $tone="green">Audio off</ActionButton>
                    <ActionButton $w={212} $tone="red">Acknowledge</ActionButton>
                    <Title>DEFAUTS</Title>
                  </HeaderInner>
                </AlertHeader>
                <AlertCard>
                  <TableFrame>
                    <AlertTable>
                      <thead><tr><th>Alert message</th><th>Date &amp; Time</th></tr></thead>
                      <tbody>
                        {alerts.map((time, i) => (
                          <AlertRow key={time} $fresh={i < 4}><td>System start</td><td>{time}</td></AlertRow>
                        ))}
                      </tbody>
                    </AlertTable>
                  </TableFrame>
                </AlertCard>
              </AlertPanel>

              <CardColumn>
                <Card $first>
                  <CardTitle>DEFAUTS</CardTitle>
                  <CardIcons>
                    <EyeButton aria-label="Voir"><Eye /></EyeButton>
                    <WarnButton aria-label="Défaut"><Exclamation size={97} /></WarnButton>
                  </CardIcons>
                </Card>
                <Card $shaded><CardTitle>DEFAUT TEMPERATURE</CardTitle></Card>
                <Card><CardTitle>LISTE DEFAUTS</CardTitle></Card>
                <Card><CardTitle>CLIMATISATION</CardTitle></Card>
                <Card><CardTitle>TENSION</CardTitle></Card>
              </CardColumn>
            </Columns>
          </Board>
        </Page>
      </Body>
    </Window>
  );
}
